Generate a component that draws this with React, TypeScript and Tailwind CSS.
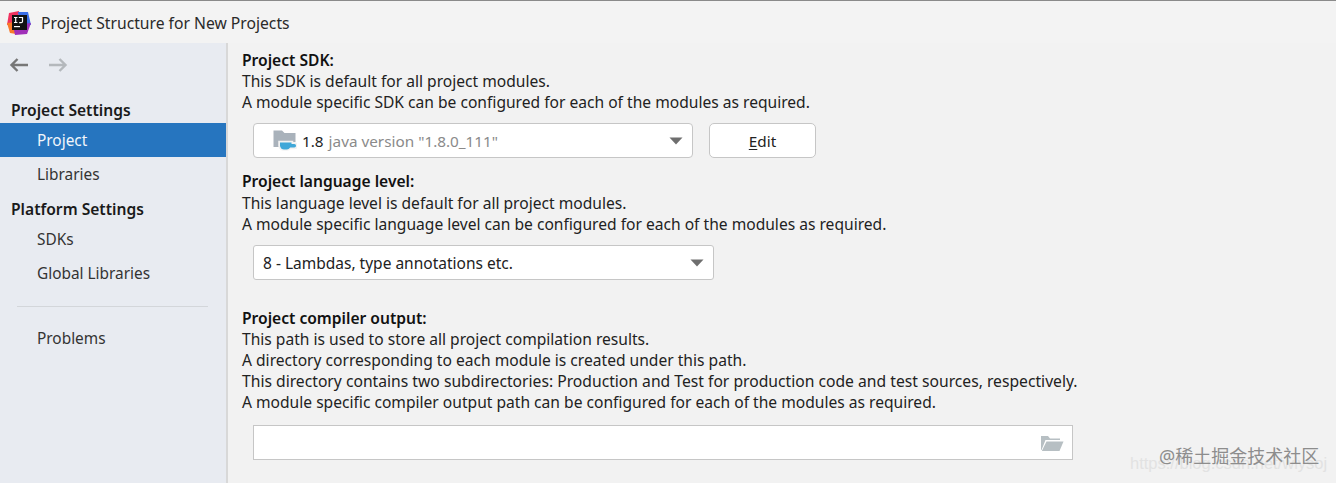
const font = { fontFamily: '"Noto Sans", sans-serif' };

function Caret() {
  return (
    <svg width="14" height="8" viewBox="0 0 14 8" className="shrink-0">
      <path d="M0.5 0.5H13.5L7 7.5Z" fill="#6e6e6e" />
    </svg>
  );
}

function Logo() {
  return (
    <svg width="24" height="24" viewBox="0 0 24 24" className="shrink-0">
      <path d="M2 2L12 0L11 13L0 14Z" fill="#f0325f" />
      <path d="M11 1L21 1L24 14L13 15Z" fill="#3b6fe8" />
      <path d="M0 12L10 11L9 23L3 22Z" fill="#f97a2a" />
      <path d="M6 14L24 12L20 23L8 24Z" fill="#a02fb8" />
      <rect x="5" y="4" width="15" height="15" fill="#111111" />
      <path d="M7 6.5H10.4M8.7 6.5V11.5M7 11.5H10.4" stroke="#fff" strokeWidth="1.2" fill="none" />
      <path d="M11.8 6.5H15.5V10.4Q15.5 11.6 14.2 11.6H12.2" stroke="#fff" strokeWidth="1.2" fill="none" />
      <rect x="7" y="15" width="6" height="1.2" fill="#fff" />
    </svg>
  );
}

function SdkIcon() {
  return (
    <svg width="24" height="21" viewBox="0 0 24 21" className="shrink-0">
      <path d="M0.5 0.5H9L11.5 3H22.5V12H13V17H0.5Z" fill="#a9b2bb" />
      <path d="M6 11.5H19.5V13H21.5A2.5 2.5 0 0 1 21.5 18.5H17.5Q16 20 14 20H11Q7 20 6 16Z" fill="#f2f2f2" stroke="#f2f2f2" strokeWidth="1.5" />
      <path d="M7 12.5H18.5V14H21.3A1.7 1.7 0 0 1 21.3 17.5H17.2Q15.8 19.5 14 19.5H11Q8 19.5 7 16Z" fill="#3fa7d8" />
    </svg>
  );
}

function FolderIcon() {
  return (
    <svg width="24" height="18" viewBox="0 0 24 18">
      <path d="M1 16V2H8L10 4.5H20V6H5.5L1.5 16Z" fill="#b7bfc3" />
      <path d="M6.5 7.5H23.5L19.5 17H1.8Z" fill="#b7bfc3" />
    </svg>
  );
}

function Arrow({ color, flip }: { color: string; flip?: boolean }) {
  return (
    <svg width="20" height="16" viewBox="0 0 20 16" className={flip ? "-scale-x-100" : ""}>
      <path d="M19 8H3M8.5 2L2.5 8L8.5 14" fill="none" stroke={color} strokeWidth="2.4" />
    </svg>
  );
}

function NavItem({ label, active }: { label: string; active?: boolean }) {
  return (
    <div className={`h-[34px] pl-[37px] pt-[2px] flex items-center text-[15.4px] ${active ? "bg-[#2675bf] text-[#f2f6fb]" : "text-[#333333]"}`}>
      {label}
    </div>
  );
}

function NavHead({ label }: { label: string }) {
  return <div className="pl-[11px] pt-[2px] h-[26px] flex items-center font-semibold text-[15.6px] text-[#1a1a1a]">{label}</div>;
}

function Lines({ items }: { items: string[] }) {
  return (
    <>
      {items.map((t) => (
        <div key={t} className="h-[21px] leading-[21px] whitespace-nowrap text-[15.6px]">{t}</div>
      ))}
    </>
  );
}

export default function App() {
  return (
    <div style={font} className="relative w-[1336px] h-[483px] overflow-hidden bg-[#f2f2f2] text-[15px] text-[#222222] flex flex-col">
      <div className="h-[43px] shrink-0 border-t border-[#8a8a8a] bg-[#f3f3f3] flex items-center pl-[7px] gap-[10px] pt-[2px]">
        <Logo />
        <span className="text-[#2a2a2a] text-[15.68px] mt-[2px]">Project Structure for New Projects</span>
      </div>
      <div className="flex flex-1 min-h-0">
        <div className="w-[226px] shrink-0 bg-[#e8ebf1] flex flex-col">
          <div className="flex items-center gap-[19px] pl-[9px] pt-[2px] h-[42px] mb-[12px]">
            <Arrow color="#777777" />
            <Arrow color="#b4b8bc" flip />
          </div>
          <NavHead label="Project Settings" />
          <NavItem label="Project" active />
          <NavItem label="Libraries" />
          <div className="mt-[5px]"><NavHead label="Platform Settings" /></div>
          <NavItem label="SDKs" />
          <NavItem label="Global Libraries" />
          <div className="mt-[16px] ml-[17px] w-[191px] h-px bg-[#d3d6da]" />
          <div className="mt-[14px]"><NavItem label="Problems" /></div>
        </div>
        <div className="w-[2px] shrink-0 bg-[#d8d8d8]" />
        <div className="flex-1 pl-[14px] pt-[7px]">
          <div className="h-[21px] leading-[21px] font-semibold text-[15.6px] text-[#111111]">Project SDK:</div>
          <Lines items={["This SDK is default for all project modules.", "A module specific SDK can be configured for each of the modules as required."]} />
          <div className="flex ml-[11px] mt-[10px] gap-[16px]">
            <div className="w-[440px] h-[35px] bg-white border border-[#c6c6c6] rounded-[4px] flex items-center pl-[19px] pr-[9px]">
              <SdkIcon />
              <span className="ml-[5px] pt-[2px] text-[#222222] text-[15.3px]">1.8</span>
              <span className="ml-[5px] pt-[2px] text-[#8a8a8a] flex-1 text-[15.3px]">java version "1.8.0_111"</span>
              <Caret />
            </div>
            <div className="w-[107px] h-[35px] pt-[2px] bg-white border border-[#c6c6c6] rounded-[5px] flex items-center justify-center text-[#222222] text-[15.3px]">
              <span><span className="underline underline-offset-2">E</span>dit</span>
            </div>
          </div>
          <div className="h-[21px] mt-[13px] leading-[21px] font-semibold text-[15.6px] text-[#111111]">Project language level:</div>
          <div className="pt-[1px] h-[42px]">
            <Lines items={["This language level is default for all project modules.", "A module specific language level can be configured for each of the modules as required."]} />
          </div>
          <div className="ml-[11px] mt-[11px] w-[461px] h-[35px] bg-white border border-[#c6c6c6] rounded-[3px] flex items-center pl-[9px] pr-[9px] justify-between">
            <span className="text-[15.5px] pt-[2px]">8 - Lambdas, type annotations etc.</span>
            <Caret />
          </div>
          <div className="h-[21px] leading-[21px] font-semibold text-[15.6px] text-[#111111] mt-[28px]">Project compiler output:</div>
          <Lines items={["This path is used to store all project compilation results.", "A directory corresponding to each module is created under this path."]} />
          <div className="h-[21px] leading-[21px] whitespace-nowrap text-[15.68px]">This directory contains two subdirectories: Production and Test for production code and test sources, respectively.</div>
          <Lines items={["A module specific compiler output path can be configured for each of the modules as required."]} />
          <div className="ml-[11px] mt-[12px] w-[820px] h-[35px] bg-white border border-[#c6c6c6] flex items-center justify-end pr-[8px]">
            <FolderIcon />
          </div>
        </div>
      </div>
      <div className="absolute left-[1130px] top-[451px] text-[16.5px] text-[#e2e2e2] whitespace-nowrap" style={{ fontFamily: '"Liberation Sans", sans-serif' }}>https://blog.csdn.net/wlysoj</div>
      <div className="absolute left-[1159px] top-[443px] text-[18px] text-[#8d8d8d] whitespace-nowrap" style={{ fontFamily: '"Noto Sans", "Noto Sans CJK SC", sans-serif' }}>@稀土掘金技术社区</div>
    </div>
  );
}
